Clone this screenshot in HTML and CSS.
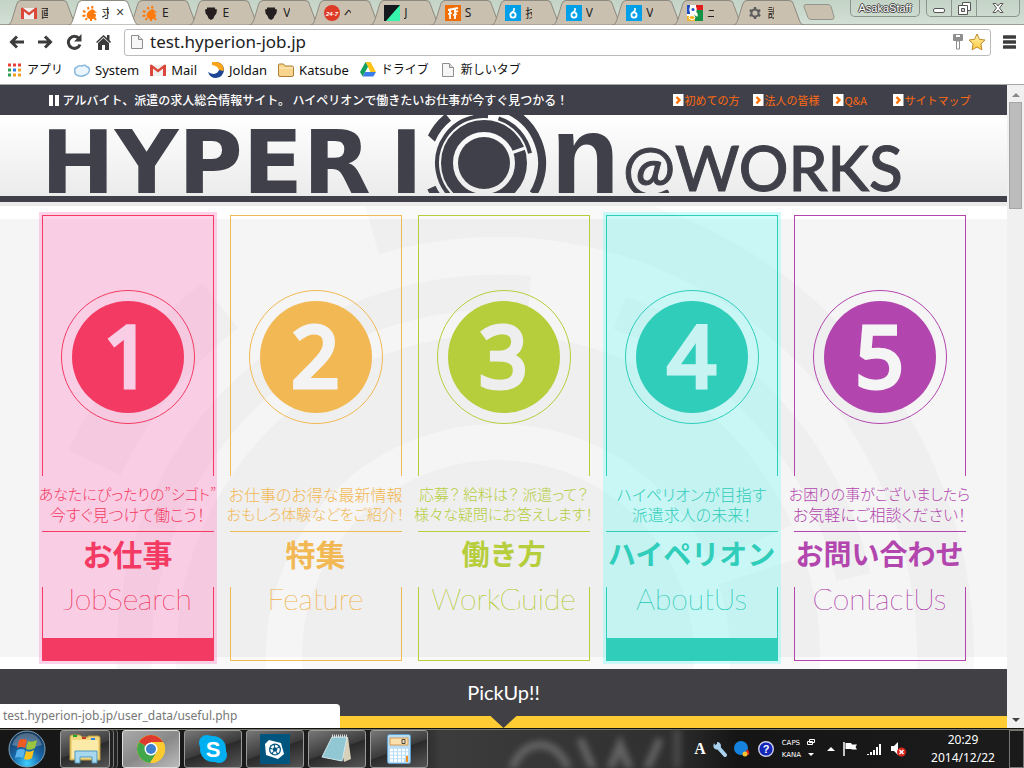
FILE: index.html
```html
<!DOCTYPE html>
<html lang="ja">
<head>
<meta charset="utf-8">
<title>HYPERION @WORKS</title>
<link rel="stylesheet" href="styles.css">
</head>
<body>
<svg class="defs" aria-hidden="true">
  <defs>
    <linearGradient id="g-star" x1="0" y1="0" x2="0" y2="1"><stop offset="0" stop-color="#fff3b0"/><stop offset="1" stop-color="#ffc93c"/></linearGradient>
    <radialGradient id="g-orb" cx=".5" cy=".9" r=".9"><stop offset="0" stop-color="#3fd0ff"/><stop offset=".45" stop-color="#1766a8"/><stop offset="1" stop-color="#16304f"/></radialGradient>
    <symbol id="tab" viewBox="0 0 74 24" preserveAspectRatio="none"><path d="M0 24C3 24 4 22 5 19L10 4Q11.500 .5 15 .5H57Q61 .5 62 4L68 19C69 22 70 24 74 24Z" fill="currentColor" stroke="#8f8a80"/></symbol>
    <symbol id="gmail" viewBox="0 0 16 16"><path d="M1 3h14v11H1z" fill="#f2f0ee"/><path d="M0 3v11h3V6.500l5 4 5-4V14h3V3l-1.500-.6L8 7.600 1.500 2.400z" fill="#d9483b"/></symbol>
    <symbol id="sun" viewBox="0 0 16 16"><path d="M8 5.500Q11 3 13 6L15 7.500 11.500 8 14 9.500Q14 13 11 14 7 15 5 12 3.500 8 8 5.500z" fill="#ff7a0a"/><path d="M6.500 4.500 6 2M3.500 7 1 6M3.500 10.500.5 11M5 13l-1.500 2M9 14v2M12.500 13l1.500 2M10 3.500 10.500 1" stroke="#ff7a0a" stroke-width="2" fill="none"/></symbol>
    <symbol id="shield" viewBox="0 0 16 16"><path d="M4 2.500h8V4l2 .5-.6 4-2 2.500-1 2.500L8 15l-2.400-1.500-1-2.500-2-2.500L2 4.500 4 4z" fill="#25201f"/></symbol>
    <symbol id="day" viewBox="0 0 16 16"><circle cx="8" cy="8" r="8" fill="#dd3b26"/><text x="8" y="10.500" class="micro">24-7</text></symbol>
    <symbol id="split" viewBox="0 0 16 16"><path d="M0 0h16v16H0z" fill="#38f5ad"/><path d="M0 0h16L2 16H0z" fill="#15191d"/></symbol>
    <symbol id="ff" viewBox="0 0 16 16"><path d="M0 0h16v16H0z" fill="#f06d06"/><path d="M3 5 13 3M5 4v10M3 9l4-1M10 4v10M10 7l3-1M8 10l4-1" stroke="#fff" stroke-width="1.800" fill="none"/></symbol>
    <symbol id="drop" viewBox="0 0 16 16"><path d="M0 0h16v16H0z" fill="#00a0e9"/><circle cx="8" cy="10" r="2.600" fill="none" stroke="#fff" stroke-width="1.800"/><path d="M9 3v2.500L7 7.500" stroke="#fff" stroke-width="1.600" fill="none"/></symbol>
    <symbol id="goog" viewBox="0 0 16 16"><path d="M0 0h9v16H0z" fill="#fff"/><path d="M9 0h7v5H9z" fill="#e21b1b"/><path d="M8 5h8v11H7z" fill="#149246"/><path d="M0 11h8v5H0z" fill="#f4b528"/><path d="M0 0h3v9H0z" fill="#1d4fc4"/><circle cx="6" cy="4.500" r="2.500" fill="none" stroke="#fff" stroke-width="2.500"/><circle cx="6" cy="4.500" r="1.500" fill="#1d4fc4"/><path d="M7 7q3 2 2 4" stroke="#fff" stroke-width="3" fill="none"/><ellipse cx="5" cy="12.500" rx="3" ry="2" fill="#f4b528" stroke="#fff"/></symbol>
    <symbol id="gear" viewBox="0 0 16 16"><circle cx="8" cy="8" r="3.600" fill="none" stroke="#5c5c5c" stroke-width="2"/><path d="M8 2v2.500M8 11.500V14M2.800 5l2 1.200M11.200 9.800l2 1.200M2.800 11l2-1.200M11.200 6.200l2-1.200" stroke="#5c5c5c" stroke-width="2.400"/></symbol>
    <symbol id="page" viewBox="0 0 16 16"><path d="M2.500 1.500h7l4 4v9h-11z" fill="#f6f6f6" stroke="#8e8e8e"/><path d="M9.500 1.500v4h4" fill="#ddd" stroke="#8e8e8e"/></symbol>
    <symbol id="chev" viewBox="0 0 12 12"><path d="M0 0h10.500v12H0z" fill="#fff"/><path d="M3.500 3 6.500 6 3.500 9.500" fill="none" stroke="#ff7300" stroke-width="2.400"/></symbol>
  </defs>
</svg>

<header class="chrome">
  <div class="titlebar">
    <div class="tabs" role="tablist">
      <button class="tab" role="tab"><svg class="shape"><use href="#tab"/></svg><svg class="fav"><use href="#gmail"/></svg><span>画</span></button>
      <button class="tab active" role="tab" aria-selected="true"><svg class="shape"><use href="#tab"/></svg><svg class="fav"><use href="#sun"/></svg><span>求</span><i class="close">✕</i></button>
      <button class="tab" role="tab"><svg class="shape"><use href="#tab"/></svg><svg class="fav"><use href="#sun"/></svg><span>E</span></button>
      <button class="tab" role="tab"><svg class="shape"><use href="#tab"/></svg><svg class="fav"><use href="#shield"/></svg><span>E</span></button>
      <button class="tab" role="tab"><svg class="shape"><use href="#tab"/></svg><svg class="fav"><use href="#shield"/></svg><span>V</span></button>
      <button class="tab" role="tab"><svg class="shape"><use href="#tab"/></svg><svg class="fav"><use href="#day"/></svg><span>へ</span></button>
      <button class="tab" role="tab"><svg class="shape"><use href="#tab"/></svg><svg class="fav"><use href="#split"/></svg><span>J</span></button>
      <button class="tab" role="tab"><svg class="shape"><use href="#tab"/></svg><svg class="fav"><use href="#ff"/></svg><span>S</span></button>
      <button class="tab" role="tab"><svg class="shape"><use href="#tab"/></svg><svg class="fav"><use href="#drop"/></svg><span>技</span></button>
      <button class="tab" role="tab"><svg class="shape"><use href="#tab"/></svg><svg class="fav"><use href="#drop"/></svg><span>V</span></button>
      <button class="tab" role="tab"><svg class="shape"><use href="#tab"/></svg><svg class="fav"><use href="#drop"/></svg><span>V</span></button>
      <button class="tab" role="tab"><svg class="shape"><use href="#tab"/></svg><svg class="fav"><use href="#goog"/></svg><span>ニ</span></button>
      <button class="tab" role="tab"><svg class="shape"><use href="#tab"/></svg><svg class="fav"><use href="#gear"/></svg><span>設</span></button>
    </div>
    <button class="newtab" aria-label="新しいタブ"><svg width="32" height="16" viewBox="0 0 32 16"><path d="M3 .5h22q2 0 3 2l3 10q.5 3-2 3H8q-2 0-3-2L1 3Q.500 .5 3 .5z" fill="#c9c0b0" stroke="#93968c"/></svg></button>
    <div class="winctl">
      <button class="user">AsakaStaff</button>
      <div class="ctl">
        <button aria-label="最小化"><svg width="12" height="12"><rect x=".5" y="6.500" width="11" height="4" rx="1.500" fill="#fff" stroke="#555"/></svg></button>
        <button aria-label="元に戻す"><svg width="13" height="13"><path d="M4.500.5h8v8h-8z" fill="#fff" stroke="#555"/><path d="M.5 3.500h9v9h-9z" fill="#fff" stroke="#555"/><path d="M3.500 6.500h3v3h-3z" fill="#ccd6ce" stroke="#555"/></svg></button>
        <button class="wide" aria-label="閉じる"><svg width="12" height="12"><path d="M1 1.500h3l2 2.500 2-2.500h3L7.500 6l3.500 4.500H8L6 8l-2 2.500H1L4.500 6z" fill="#fff" stroke="#555"/></svg></button>
      </div>
    </div>
  </div>
  <div class="toolbar">
    <button aria-label="戻る"><svg width="17" height="16"><path d="M9 2.500 3.500 8 9 13.500M3.500 8H16" fill="none" stroke="#3c3c3c" stroke-width="3"/></svg></button>
    <button aria-label="進む"><svg width="17" height="16"><path d="M8 2.500 13.500 8 8 13.500M13.500 8H1" fill="none" stroke="#3c3c3c" stroke-width="3"/></svg></button>
    <button aria-label="再読み込み"><svg width="17" height="16"><path d="M13 4.500A6 6 0 1 0 14 10.500" fill="none" stroke="#3c3c3c" stroke-width="3"/><path d="M15.500 0v7.500H8z" fill="#3c3c3c"/></svg></button>
    <button aria-label="ホーム"><svg width="17" height="16"><path d="M8.500 1 12 4V1h2.500v5L16 8l-1 1-6.500-6L2 9 1 8z" fill="#3c3c3c"/><path d="M8.500 4 14 9v7h-4v-5H7v5H3V9z" fill="#3c3c3c"/></svg></button>
    <div class="omnibox">
      <svg class="fav"><use href="#page"/></svg>
      <input type="text" aria-label="アドレス" value="test.hyperion-job.jp">
      <svg width="10" height="16"><rect width="10" height="7" rx="1" fill="#8e8e8e"/><path d="M3 2h4" stroke="#fff" stroke-width="2"/><path d="M3.500 7h3v8h-3z" fill="#fff" stroke="#8e8e8e"/></svg>
      <svg width="18" height="18" viewBox="0 0 18 18"><path d="m9 1 2.400 5.300 5.600.7-4.100 3.900 1 5.900L9 14l-4.900 2.800 1-5.900L1 7l5.600-.7z" fill="url(#g-star)" stroke="#c08a2c"/></svg>
    </div>
    <button aria-label="メニュー"><svg width="13" height="14"><path d="M1 2h11M1 7h11M1 12h11" stroke="#3c3c3c" stroke-width="3.400" stroke-linecap="round"/></svg></button>
  </div>
  <nav class="bookmarks" aria-label="ブックマーク">
    <a href="#" class="jp"><svg width="14" height="14"><path d="M0 2h13" stroke="#e8403a" stroke-width="3" stroke-dasharray="3 2"/><path d="M0 7h3M0 12h3" stroke="#2f9e50" stroke-width="3"/><path d="M5 7h3" stroke="#2b7de9" stroke-width="3"/><path d="M10 7h3M5 12h8" stroke="#f0a020" stroke-width="3" stroke-dasharray="3 2"/></svg>アプリ</a>
    <a href="#"><svg width="16" height="14"><path d="M4 12.500Q.5 12 .8 8.500 0 5 3 4 4 2 8 3q3-1.500 4.500.5 3 .5 3 3.500-.5 4-4 5-4 2-7.500.5z" fill="#eaf5fd" stroke="#88b9dd" stroke-width="1.500"/></svg>System</a>
    <a href="#"><svg class="fav"><use href="#gmail"/></svg>Mail</a>
    <a href="#"><svg width="16" height="16"><path d="M9 0q7 1 7 8.500Q15 15 8 16q-6 0-8-6 3 2 6 2 5-1 5-5 0-4-4-7z" fill="#1c4595"/><path d="M4 0q8-1 11 4 1 3 .5 5L11 8Q10 4 4 3z" fill="#fba61a"/></svg>Joldan</a>
    <a href="#"><svg width="16" height="14"><path d="M.5 12V2q0-1 1-1h4l1.500 2H14q1.500 0 1.500 1.500V12q0 1.500-1.500 1.500H2Q.5 13.500.5 12z" fill="#f8d48c" stroke="#ae7d34"/><path d="M1 5h14" stroke="#fff0c4"/></svg>Katsube</a>
    <a href="#" class="jp"><svg width="16" height="15"><path d="M5.500 0h5L16 10h-5.500z" fill="#fbc417"/><path d="M5.500 0 8 4.700 2.700 14.500 0 10z" fill="#12a05c"/><path d="M5.200 10H16l-2.700 4.500H2.700z" fill="#3c7de8"/></svg>ドライブ</a>
    <a href="#" class="jp"><svg class="fav"><use href="#page"/></svg>新しいタブ</a>
  </nav>
</header>

<div class="window">
  <main class="site">
    <div class="topbar">
      <div class="topbar-in">
        <h1><i class="bars"></i>アルバイト、派遣の求人総合情報サイト。 ハイペリオンで働きたいお仕事が今すぐ見つかる！</h1>
        <nav class="subnav">
          <a href="#"><svg><use href="#chev"/></svg>初めての方</a>
          <a href="#"><svg><use href="#chev"/></svg>法人の皆様</a>
          <a href="#" class="short"><svg><use href="#chev"/></svg>Q&amp;A</a>
          <a href="#"><svg><use href="#chev"/></svg>サイトマップ</a>
        </nav>
      </div>
    </div>
    <div class="brand">
      <svg class="logo" viewBox="0 0 934 78" role="img" aria-label="HYPERION @WORKS">
        <text x="4" y="78" class="word">HYPER</text>
        <text x="353" y="78" class="word">I</text>
        <text x="514" y="78" class="word-n">n</text>
        <text x="586" y="76" class="works">@WORKS</text>
        <g transform="translate(447 48)" fill="none" stroke="#40404a">
          <circle r="26" fill="#40404a" stroke="none"/>
          <circle r="37" stroke-width="12"/>
          <path d="M27-10 44-16" stroke="#f7f7f7" stroke-width="3"/>
          <circle r="47" stroke-width="4" pathLength="360" stroke-dasharray="195 165" transform="rotate(80)"/>
          <circle r="47" stroke-width="4" pathLength="360" stroke-dasharray="60 300" transform="rotate(-72)"/>
          <circle r="58" stroke-width="9" pathLength="360" stroke-dasharray="27 333" transform="rotate(205)"/>
          <circle r="58" stroke-width="8" pathLength="360" stroke-dasharray="98 262" transform="rotate(-66)"/>
          <circle r="58" stroke-width="9" pathLength="360" stroke-dasharray="20 340" transform="rotate(135)"/>
        </g>
      </svg>
    </div>
    <section class="menu">
      <svg class="rings" viewBox="0 206 1007 463" preserveAspectRatio="xMidYMin slice" aria-hidden="true">
        <g transform="translate(498 656)" fill="none" stroke="#000" stroke-opacity=".025">
          <circle r="447.500" stroke-width="57" pathLength="360" stroke-dasharray="120 240" transform="rotate(-106.500)"/>
          <circle r="447.500" stroke-width="58" pathLength="360" stroke-dasharray="26 334" transform="rotate(205.600)"/>
          <circle r="364" stroke-width="35" pathLength="360" stroke-dasharray="105 255" transform="rotate(170)"/>
          <circle r="364" stroke-width="35" pathLength="360" stroke-dasharray="58 302" transform="rotate(-70.500)"/>
          <circle r="277" stroke-width="90" pathLength="360" stroke-dasharray="354 6" transform="rotate(-18)"/>
          <circle r="196" fill="#000" fill-opacity=".025" stroke="none"/>
        </g>
      </svg>
      <div class="cards">
        <a href="#" class="card job on">
          <div class="top"><div class="ring"><b>1</b></div></div>
          <p><span class="long">あなたにぴったりの”シゴト”</span><span>今すぐ見つけて働こう！</span></p>
          <h2>お仕事</h2>
          <div class="foot">JobSearch</div>
        </a>
        <a href="#" class="card feature">
          <div class="top"><div class="ring"><b>2</b></div></div>
          <p><span>お仕事のお得な最新情報</span><span class="long">おもしろ体験などをご紹介！</span></p>
          <h2>特集</h2>
          <div class="foot">Feature</div>
        </a>
        <a href="#" class="card guide">
          <div class="top"><div class="ring"><b>3</b></div></div>
          <p><span class="long">応募？ 給料は？ 派遣って？</span><span class="long">様々な疑問にお答えします！</span></p>
          <h2>働き方</h2>
          <div class="foot">WorkGuide</div>
        </a>
        <a href="#" class="card about on">
          <div class="top"><div class="ring"><b>4</b></div></div>
          <p><span>ハイペリオンが目指す</span><span>派遣求人の未来！</span></p>
          <h2>ハイペリオン</h2>
          <div class="foot">AboutUs</div>
        </a>
        <a href="#" class="card contact">
          <div class="top"><div class="ring"><b>5</b></div></div>
          <p><span class="long">お困りの事がございましたら</span><span>お気軽にご相談ください！</span></p>
          <h2>お問い合わせ</h2>
          <div class="foot">ContactUs</div>
        </a>
      </div>
    </section>
    <h2 class="pickup">PickUp!!</h2>
    <div class="stripe"></div>
  </main>
  <div class="scroll" aria-hidden="true"><i class="up"></i><div class="thumb"></div><i class="down"></i></div>
  <div class="status">test.hyperion-job.jp/user_data/useful.php</div>
</div>

<footer class="taskbar">
  <svg class="wall" viewBox="0 0 300 39" aria-hidden="true"><g fill="none" stroke="#777" stroke-width="8"><ellipse cx="70" cy="54" rx="30" ry="38"/><path d="m110 10 22 50 18-44 18 44 22-50"/><path d="M207 0v39" stroke="#555"/></g></svg>
  <button class="orb" aria-label="スタート"><svg width="38" height="38" viewBox="0 0 38 38"><circle cx="19" cy="19" r="18" fill="url(#g-orb)" stroke="#7fa3b8"/><path d="M4 15Q8 3 19 3t15 12q-15 5-30 0z" fill="#fff" fill-opacity=".25"/><path d="M11 10q4-2 8 0l-2 8q-4-2-8 0z" fill="#ee5a24"/><path d="M20 11q4 2 9-1l-2 8q-4 3-9 1z" fill="#9bc53d"/><path d="M9 20q4-2 8 0l-2 8q-4-2-8 0z" fill="#58b4ec"/><path d="M18 21q4 2 8-1l-2 8q-4 3-8 1z" fill="#fcc21b"/></svg></button>
  <div class="tasks">
    <button class="task stack" aria-label="エクスプローラー"><svg width="32" height="32"><path d="M1 4q0-2 2-2h8l2 2h6V3h10q2 0 2 2v22H1z" fill="#f1d67c" stroke="#b99a3e"/><path d="M3 7h26v18H3z" fill="#fbeaa8"/><path d="M4 3h4" stroke="#1da531" stroke-width="2"/><path d="M13 5h4" stroke="#c8372d" stroke-width="2"/><path d="M22 6h4" stroke="#2a83d6" stroke-width="2"/><path d="M6 30V18h22v12h-5v-6H11v6z" fill="#a7d8ee" stroke="#4d98bd"/></svg></button>
    <button class="task lit" aria-label="Chrome"><svg width="30" height="30" viewBox="0 0 30 30"><circle cx="15" cy="15" r="14" fill="#fc3"/><path d="M15 15 2.900 8A14 14 0 0 1 27.100 8H15z" fill="#de3b2e"/><path d="M2.900 8A14 14 0 0 0 14 29l7-11-6-3z" fill="#42a64b"/><path d="M15 8h12.100A14 14 0 0 1 14 29l7-11z" fill="#fccb2f"/><circle cx="15" cy="15" r="6.500" fill="#fff"/><circle cx="15" cy="15" r="5" fill="#3f7fd0"/></svg></button>
    <button class="task" aria-label="Skype"><svg width="30" height="30"><circle cx="15" cy="15" r="13" fill="#00aff0"/><circle cx="9" cy="9" r="8" fill="#00aff0"/><circle cx="21" cy="21" r="8" fill="#00aff0"/><text x="15" y="23" class="skype">S</text></svg></button>
    <button class="task" aria-label="フォト"><svg width="30" height="30"><path d="M0 0h30v30H0z" fill="#00557f"/><path d="m9 6 12 3 3 11-6 5-12-4-1-11z" fill="#fff"/><circle cx="15" cy="15.500" r="6" fill="#00557f"/><circle cx="15" cy="15.500" r="3.500" fill="none" stroke="#fff" stroke-width="2.500" stroke-dasharray="3 1"/><circle cx="15" cy="15.500" r="1.500" fill="#00557f"/></svg></button>
    <button class="task" aria-label="メモ帳"><svg width="32" height="30"><path d="m18 3 9 0 3 22-7 3z" fill="#d8d0b8"/><path d="M11 3h15l-5 24-20-4z" fill="#91c6d3" stroke="#cfe7ec"/><path d="M11 2h16" stroke="#ddd" stroke-width="3" stroke-dasharray="1 1"/></svg></button>
    <button class="task" aria-label="電卓"><svg width="24" height="30"><rect x=".5" y=".5" width="23" height="29" rx="2" fill="#b8dcf4" stroke="#5f9dca"/><path d="M3 4h18v7H3z" fill="#fbe0ae" stroke="#d59a4d"/><path d="M15 5.500h3v4h-3z" fill="none" stroke="#444"/><path d="M3 16h18M3 19.500h18M3 23h18M3 26.500h14" stroke="#fff" stroke-width="2.500" stroke-dasharray="3 1"/><path d="M19 22h2v6h-2z" fill="#f28c1e"/></svg></button>
  </div>
  <div class="tray">
    <span class="ime">A</span>
    <svg width="16" height="16"><path d="M5 5l8 9" stroke="#a9d3ee" stroke-width="4" stroke-linecap="round"/><path d="M2 2q-2 5 2 6.500Q8 9 9 5.500 9 1 5 1v3.500L3.500 5z" fill="#a9d3ee"/></svg>
    <svg width="16" height="16"><circle cx="7" cy="7" r="7" fill="#1583dd"/><path d="M13 8q3 2 2 6l-4-1z" fill="#d8281c"/><circle cx="11" cy="13" r="2.500" fill="#f6c12c"/></svg>
    <svg width="16" height="16"><circle cx="8" cy="8" r="7.300" fill="#1426b8" stroke="#cdd0ea" stroke-width="1.400"/><text x="8" y="12" class="help">?</text></svg>
    <div class="locks"><span>CAPS</span><span>KANA</span></div>
    <svg width="8" height="22"><path d="M2.500 1.500h5v3h-5zM.5 3.500h5v3h-5z" fill="#222" stroke="#fff"/><path d="M1 15h6l-3 3z" fill="#fff"/></svg>
    <svg class="more" width="8" height="6"><path d="M0 5h8L4 1z" fill="#fff"/></svg>
    <svg width="16" height="16"><path d="M1 1v14" stroke="#fff" stroke-width="1.500"/><path d="M2.500 2H8l1 1.500h5L12.500 6 14 8.500H9L8 8H2.500z" fill="#fff"/></svg>
    <svg width="16" height="16"><path d="M1 14v-1M4 14v-3M7 14V9M10 14V6M13 14V3" stroke="#fff" stroke-width="2"/></svg>
    <svg width="16" height="16"><path d="M0 5h3l4-4v13l-4-4H0z" fill="#fff"/><circle cx="10.500" cy="11" r="4.500" fill="#d9261c"/><path d="m8.500 9 4 4m0-4-4 4" stroke="#fff" stroke-width="1.500"/></svg>
    <time class="clock"><span>20:29</span><span>2014/12/22</span></time>
    <button class="peek" aria-label="デスクトップの表示"></button>
  </div>
</footer>
</body>
</html>
```
FILE: styles.css
```css
* { box-sizing: border-box; }
html { height: 100%; }
body {
  margin: 0;
  height: 100%;
  display: flex;
  flex-direction: column;
  overflow: hidden;
  font-family: "Noto Sans", "Noto Sans CJK JP", sans-serif;
  font-size: 12px;
  color: #111;
  background: #fff;
}
button { padding: 0; border: 0; background: none; font: inherit; color: inherit; }
a { color: inherit; text-decoration: none; }
svg { display: block; flex: none; }
.defs { position: absolute; width: 0; height: 0; }
.fav { width: 16px; height: 16px; }
.micro { font: italic bold 6px "Liberation Sans", sans-serif; fill: #fff; text-anchor: middle; }

/* browser frame */
.titlebar {
  height: 25px;
  padding-left: 10px;
  display: flex;
  align-items: flex-start;
  background: linear-gradient(#c3d3c6, #d3dfd4);
  border-bottom: 1px solid #9b9c94;
}
.tabs { flex: 0 1 787px; display: flex; min-width: 0; }
.tab {
  position: relative;
  flex: 1;
  min-width: 0;
  height: 25px;
  padding: 0 0 0 11px;
  display: flex;
  align-items: center;
  gap: 4px;
  color: #c9c0b0;
}
.tab .shape { position: absolute; left: -3px; top: 0; width: 72px; height: 25px; }
.tab .fav, .tab span, .close { position: relative; }
.tab span { width: 7px; overflow: hidden; color: #222; text-align: left; white-space: nowrap; }
.tab.active { color: #fff; z-index: 1; }
.close { margin-left: 3px; font-style: normal; font-size: 11px; color: #444; font-family: "DejaVu Sans", sans-serif; }
.newtab { margin: 4px 0 0 6px; }
.winctl { margin-left: auto; padding-right: 4px; display: flex; gap: 6px; }
.user {
  height: 17px;
  width: 70px;
  border: 1px solid #8c958d;
  border-top: 0;
  border-radius: 0 0 5px 5px;
  color: #fff;
  font: 11px/16px "Liberation Sans", sans-serif;
  text-shadow: 1px 0 #444, -1px 0 #444, 0 1px #444, 0 -1px #444;
}
.ctl { display: flex; height: 17px; border: 1px solid #8c958d; border-top: 0; border-radius: 0 0 5px 5px; }
.ctl button { width: 25px; display: flex; align-items: center; justify-content: center; border-right: 1px solid #8c958d; }
.ctl .wide { width: 42px; border: 0; }

.toolbar { height: 34px; padding: 0 8px; display: flex; align-items: center; gap: 12px; }
.omnibox {
  flex: 1;
  height: 27px;
  padding: 0 4px;
  display: flex;
  align-items: center;
  gap: 5px;
  border: 1px solid #bbb;
  border-radius: 3px;
}
.omnibox input {
  flex: 1;
  min-width: 0;
  padding: 0;
  border: 0;
  outline: 0;
  font: 17px/22px "Noto Sans", sans-serif;
  color: #222;
  background: none;
}
.bookmarks { height: 25px; padding: 0 8px 4px; display: flex; align-items: center; gap: 11px; }
.bookmarks a { display: flex; align-items: center; gap: 5px; font-size: 13px; line-height: 18px; white-space: nowrap; }
.bookmarks .jp { font-size: 12px; }

/* page window */
.window { position: relative; flex: 1; min-height: 0; display: flex; border-top: 1px solid #a3a9a5; overflow: hidden; }
.site { flex: 1; min-width: 0; }
.topbar { background: #40404a; color: #fff; font-family: "Noto Sans CJK JP", sans-serif; }
.topbar-in {
  max-width: 934px;
  height: 30px;
  margin: 0 auto;
  padding-left: 12px;
  display: flex;
  align-items: center;
  justify-content: space-between;
}
.topbar h1 { margin: 0; display: flex; align-items: center; font-size: 12px; font-weight: 500; line-height: 18px; white-space: nowrap; }
.bars { width: 10px; height: 11px; margin-right: 4px; border: solid #fff; border-width: 0 4px; }
.subnav { display: flex; gap: 13px; color: #ff6a10; font-size: 11px; line-height: 16px; white-space: nowrap; }
.subnav a { display: flex; align-items: center; }
.subnav svg { width: 12px; height: 12px; }
.subnav .short { min-width: 47px; }
.brand {
  height: 91px;
  background: linear-gradient(#fff, #ebebeb) 0 0 / 100% 81px no-repeat, #ebebeb;
  border-bottom: 4px solid #ebebeb;
}
.brand::after { content: ""; display: block; height: 6px; margin-top: 3px; background: #40404a; }
.logo { width: 100%; max-width: 934px; height: 78px; margin: 0 auto; fill: #40404a; }
.word { font: bold 88px "DejaVu Sans", sans-serif; }
.word-n { font: bold 112px "Liberation Sans", sans-serif; }
.works { font: 500 62px Lato, sans-serif; stroke: #40404a; stroke-width: 1px; }

.menu {
  position: relative;
  padding: 6px 8px 5px;
  background: linear-gradient(#f5f5f5, #f5f5f5) 0 13px / 100% 438px no-repeat, #fff;
}
.rings { position: absolute; inset: 0; width: 100%; height: 100%; }
.cards { position: relative; max-width: 930px; margin: 0 auto; display: grid; grid-template-columns: repeat(5, minmax(0, 1fr)); gap: 10px; }
.card { padding: 3px; color: var(--c); text-align: center; white-space: nowrap; }
.job { --c: #f33a62; --paper: #f8cde5; }
.feature { --c: #f2b854; --paper: #f3f3f3; }
.guide { --c: #b6cd3c; --paper: #eee; }
.about { --c: #31cdbb; --paper: #c7f4f2; }
.contact { --c: #b346ae; --paper: #f5f5f5; }
.job.on { background: rgba(255, 147, 206, .4); }
.about.on { background: rgba(134, 249, 244, .4); }
.top { padding: 74px 0 52px; border: solid var(--c); border-width: 1px 1px 0; }
.ring {
  width: 134px;
  height: 134px;
  margin: 0 auto;
  padding: 10px;
  border: 1px solid var(--c);
  border-radius: 50%;
}
.ring b {
  display: block;
  height: 112px;
  border-radius: 50%;
  background: var(--c);
  color: var(--paper);
  font: 400 84px/108px "Open Sans", sans-serif;
  -webkit-text-stroke: 5px var(--paper);
  stroke-linejoin: round;
}
.card p {
  margin: 0 -5px;
  padding: 8px 0 7px;
  font: 300 16px/20px "Noto Sans CJK JP", sans-serif;
  font-feature-settings: "palt";
}
.card p span { display: block; }
.card .long { font-size: 15px; }
.card h2 {
  margin: 0;
  height: 56px;
  border-top: 1px solid var(--c);
  font: bold 28px/42px "Noto Sans CJK JP", sans-serif;
}
.job h2, .feature h2 { font-size: 30px; }
.foot {
  height: 74px;
  border: solid var(--c);
  border-width: 0 1px 1px;
  font: 100 30px/22px Lato, sans-serif;
  text-shadow: 0 0 var(--c), 0 0 var(--c);
}
.on .foot { border-bottom-width: 23px; }

.pickup {
  margin: 0;
  height: 47px;
  background: #404045;
  color: #fff;
  text-align: center;
  font: 400 20px/46px Lato, sans-serif;
}
.stripe { height: 12px; background: #fc3; }
.stripe::before { content: ""; display: block; width: 26px; height: 12px; margin: 0 auto; background: #404045; clip-path: polygon(0 0, 100% 0, 50% 100%); }

.scroll { flex: none; width: 17px; padding: 0 2px; display: flex; flex-direction: column; align-items: center; background: #f0f0f0; }
.up, .down { border: 4px solid transparent; }
.up { margin: 4px 0 5px; border-bottom-color: #888; border-top: 0; height: 8px; }
.down { margin: auto 0 2px; border-top-color: #444; }
.thumb { width: 13px; height: 107px; background: #bcbcbc; border: 1px solid #a5a5a5; }
.status {
  position: absolute;
  left: 0;
  bottom: 0;
  width: 340px;
  height: 24px;
  padding-left: 3px;
  background: #fff;
  border-radius: 0 4px 0 0;
  color: #777;
  line-height: 23px;
}

/* taskbar */
.taskbar {
  position: relative;
  height: 40px;
  display: flex;
  align-items: center;
  overflow: hidden;
  background: linear-gradient(90deg, #161616, #1e1e1e 40%, #3c3c3c 43%, #303030 65%, #151515 72%, #1c1c1c);
  border-top: 1px solid #111;
  box-shadow: inset 0 1px #77756a;
  color: #fff;
}
.wall { position: absolute; left: 470px; top: 0; width: 300px; height: 39px; filter: blur(3px); opacity: .7; }
.orb { margin-left: 8px; }
.tasks { margin-left: 14px; display: flex; gap: 4px; }
.task {
  width: 58px;
  height: 38px;
  display: flex;
  align-items: center;
  justify-content: center;
  border: 1px solid #999;
  border-radius: 3px;
  background: linear-gradient(160deg, #777, #3b3b3b 50%, #2a2a2a 52%, #555);
}
.task.stack { width: 50px; margin-right: 8px; box-shadow: 3px 0 #222, 4px 0 #777, 7px 0 #222, 8px 0 #666; }
.task.lit { background: linear-gradient(150deg, #aaa, #888 50%, #bbb); border-color: #ddd; }
.skype { font: bold 22px "Liberation Sans", sans-serif; fill: #fff; text-anchor: middle; }
.help { font: bold 11px "Liberation Sans", sans-serif; fill: #fff; text-anchor: middle; }
.tray { position: relative; height: 100%; margin-left: auto; display: flex; align-items: center; gap: 6px; }
.ime { font: bold 16px "Liberation Serif", serif; }
.locks { display: flex; flex-direction: column; font: 7px/12px "DejaVu Sans", sans-serif; }
.more { margin: 0 4px 0 6px; }
.tray svg + svg { margin-right: 2px; }
.clock { width: 80px; margin-left: 8px; display: flex; flex-direction: column; text-align: center; line-height: 18px; }
.peek { width: 15px; height: 38px; border: 1px solid #777; background: #1a1a1a; }
```
